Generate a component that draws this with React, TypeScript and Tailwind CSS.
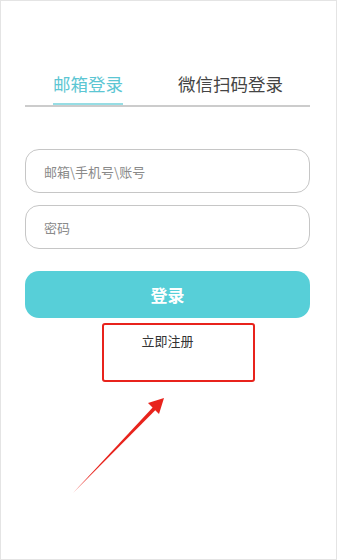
import React, { useState } from 'react';

const font = { fontFamily: '"Noto Sans CJK SC", "Noto Sans", sans-serif' };

const App = () => {
  const [tab, setTab] = useState(0);
  const tabs = ['邮箱登录', '微信扫码登录'];

  return (
    <div
      className="relative w-[337px] h-[560px] bg-white border border-[#e4e4e4] overflow-hidden"
      style={font}
    >
      <div className="ml-[24px] mr-[26px] mt-[71px]">
        {/* Tabs */}
        <div className="flex border-b-2 border-[#cccccc] pl-[28px] gap-[55px]">
          {tabs.map((t, i) => (
            <div
              key={t}
              onClick={() => setTab(i)}
              className={`text-[17.5px] leading-[24px] pb-[7px] border-b-2 cursor-pointer ${
                tab === i ? 'text-[#5cc6d3] border-[#97dde4]' : 'text-[#444444] border-transparent'
              }`}
            >
              {t}
            </div>
          ))}
        </div>

        {/* Inputs */}
        <div className="mt-[42px] flex flex-col gap-[12px]">
          <input
            className="h-[44px] w-full rounded-[14px] border border-[#c6c6c6] px-[18px] text-[13px] text-[#333] placeholder:text-[#8a8a8a] outline-none"
            placeholder="邮箱\手机号\账号"
          />
          <input
            type="password"
            className="h-[44px] w-full rounded-[14px] border border-[#c6c6c6] px-[18px] text-[13px] text-[#333] placeholder:text-[#8a8a8a] outline-none"
            placeholder="密码"
          />
        </div>

        <button className="mt-[22px] h-[47px] w-full rounded-[14px] bg-[#57cfd8] text-white text-[17px] font-bold">
          登录
        </button>

        <div className="mt-[14px] text-center text-[13px] leading-[18px] text-[#333333]">立即注册</div>
      </div>

      {/* annotation */}
      <div className="absolute left-[101px] top-[322px] w-[153px] h-[59px] border-2 border-[#e8231c] rounded-[3px]" />
      <svg className="absolute left-0 top-0" width="337" height="560" viewBox="0 0 337 560">
        <polygon points="72,492 154,404 156.5,407" fill="#e8231c" />
        <polygon points="163,397 147,402 158,413" fill="#e8231c" />
      </svg>
    </div>
  );
};

export default App;
